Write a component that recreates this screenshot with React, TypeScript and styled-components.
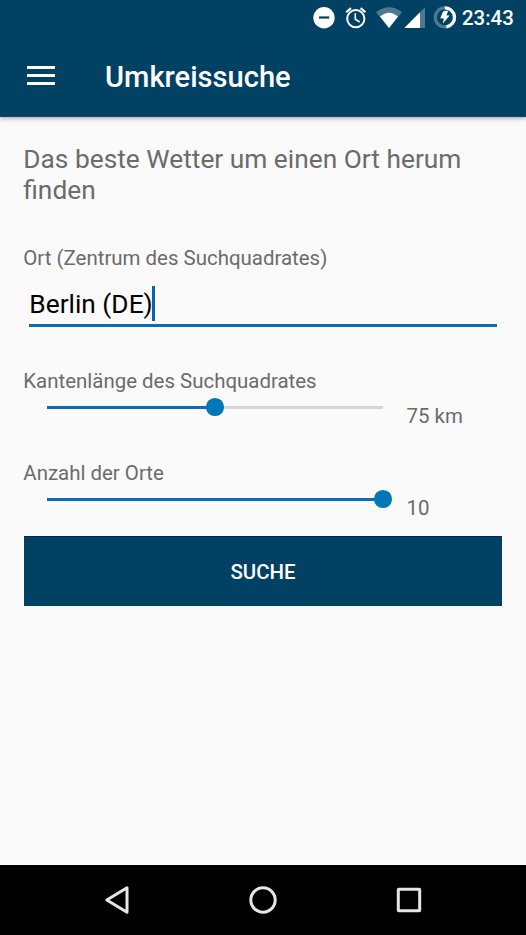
import React from "react";
import styled, { createGlobalStyle } from "styled-components";

const GlobalStyle = createGlobalStyle`
  * { box-sizing: border-box; }
  html, body, #root { height: 100%; }
  body {
    margin: 0;
    background: #fafafa;
    font-family: Roboto, "Liberation Sans", sans-serif;
    overflow: hidden;
  }
`;

const Screen = styled.div`
  display: flex;
  flex-direction: column;
  width: 526px;
  height: 935px;
  background: #fafafa;
`;

const Header = styled.header`
  flex: none;
  height: 117px;
  background: #014163;
  color: #fff;
  border-bottom: 1px solid #173f69;
  box-shadow: 0 1px 5px rgba(0, 0, 0, 0.38);
`;

const StatusBar = styled.div`
  display: flex;
  justify-content: flex-end;
  height: 35px;
  padding-right: 12px;
`;

const StatusIcons = styled.svg`
  flex: none;
  width: 150px;
  height: 35px;
`;

const Clock = styled.time`
  width: 52px;
  font-size: 20.4px;
  font-weight: 500;
  line-height: 36px;
  white-space: nowrap;
`;

const Toolbar = styled.div`
  display: flex;
  align-items: center;
  height: 81px;
  padding-left: 27px;
  gap: 50px;
`;

const MenuButton = styled.button`
  display: flex;
  flex-direction: column;
  gap: 5px;
  width: 28px;
  padding: 0;
  border: 0;
  background: none;
`;

const MenuLine = styled.span`
  height: 3px;
  background: #fff;
`;

const Title = styled.h1`
  margin: 3px 0 0;
  font-size: 29.1px;
  font-weight: 500;
  line-height: 34px;
`;

const Form = styled.main`
  flex: 1;
  padding: 27px 24px 0 23.3px;
  color: #6b6b6b;
`;

const Intro = styled.p`
  margin: 0;
  font-size: 26.3px;
  line-height: 31px;
`;

const Label = styled.div<{ $top: number }>`
  margin-top: ${({ $top }) => $top}px;
  font-size: 20.45px;
  line-height: 24px;
`;

const TextField = styled.div`
  display: flex;
  align-items: center;
  height: 57px;
  margin: 0 5.4px 0 6px;
  padding-top: 15px;
  border-bottom: 3px solid #0a6db5;
  color: #000;
  font-size: 26.3px;
`;

const FieldText = styled.span`
  line-height: 31px;
`;

const Caret = styled.span`
  width: 3px;
  height: 35px;
  margin: -3px 0 0 -0.8px;
  background: #0a62b0;
`;

const SliderRow = styled.div`
  display: flex;
  height: 34px;
  padding-left: 23.7px;
`;

const Track = styled.div`
  position: relative;
  width: 336px;
  height: 3px;
  margin-top: 13px;
  background: #d5d5d5;
`;

const Fill = styled.div<{ $value: number }>`
  width: ${({ $value }) => $value}%;
  height: 3px;
  background: #0a6db5;
`;

const Thumb = styled.div<{ $value: number }>`
  position: absolute;
  top: -7.8px;
  left: calc(${({ $value }) => $value}% - 8.7px);
  width: 17.6px;
  height: 17.6px;
  border-radius: 50%;
  background: #0277b5;
`;

const SliderValue = styled.output`
  margin: 11px 0 0 23.5px;
  font-size: 20.45px;
  line-height: 24px;
`;

const SearchButton = styled.button`
  display: block;
  width: 478.5px;
  height: 70px;
  margin: 17px 0 0 0.5px;
  padding: 0;
  border: 0;
  border-top: 1px solid #06265b;
  background: #014163;
  color: #fff;
  font: 500 20.45px Roboto, "Liberation Sans", sans-serif;
`;

const NavBar = styled.nav`
  flex: none;
  display: flex;
  justify-content: center;
  align-items: center;
  gap: 106px;
  height: 70px;
  background: #000;
`;

const NavIcon = styled.svg`
  width: 40px;
  height: 40px;
  fill: none;
  stroke: #e6e6e6;
  stroke-width: 3;
  stroke-linejoin: round;
`;

interface SliderProps {
  label: string;
  value: number;
  text: string;
  top: number;
}

function Slider({ label, value, text, top }: SliderProps) {
  return (
    <>
      <Label $top={top}>{label}</Label>
      <SliderRow>
        <Track role="slider" aria-label={label} aria-valuenow={value} aria-valuetext={text}>
          <Fill $value={value} />
          <Thumb $value={value} />
        </Track>
        <SliderValue>{text}</SliderValue>
      </SliderRow>
    </>
  );
}

function SystemIcons() {
  return (
    <StatusIcons viewBox="312 0 150 35" fill="none">
      <circle cx="324" cy="17.7" r="10.7" fill="#fff" />
      <path d="M319 17.5h10.2" stroke="#014163" strokeWidth="2.2" />
      <g stroke="#fff">
        <circle cx="355.8" cy="18.7" r="8.6" strokeWidth="2" />
        <path d="M355.3 13.2v6l4.4 2.8" strokeWidth="1.6" />
        <path d="M346.2 12.2l4.8-4.1M365.4 12.2l-4.8-4.1" strokeWidth="2.1" />
      </g>
      <path d="M376 12.2Q389 2.2 402 12.2L389 28Z" fill="#4d7a92" />
      <path d="M380 16.6Q389 9 398 16.6L389 28Z" fill="#fff" />
      <path d="M425 7.3V28H404.3Z" fill="#4d7a92" />
      <path d="M420 12.3V28H404.3Z" fill="#fff" />
      <circle cx="444.8" cy="17.4" r="9.5" stroke="#4d7a92" strokeWidth="3.2" />
      <path d="M444.8 7.9a9.5 9.5 0 0 1 1.6 18.9" stroke="#fff" strokeWidth="3.2" />
      <path d="M443.2 11.2l5-.6-1.7 4.8 3.1.2-6.7 7.9.9-5-3.6-.2Z" fill="#fff" />
    </StatusIcons>
  );
}

export default function App() {
  return (
    <Screen>
      <GlobalStyle />
      <Header>
        <StatusBar>
          <SystemIcons />
          <Clock>23:43</Clock>
        </StatusBar>
        <Toolbar>
          <MenuButton aria-label="Menü">
            <MenuLine />
            <MenuLine />
            <MenuLine />
          </MenuButton>
          <Title>Umkreissuche</Title>
        </Toolbar>
      </Header>
      <Form>
        <Intro>Das beste Wetter um einen Ort herum finden</Intro>
        <Label $top={40}>Ort (Zentrum des Suchquadrates)</Label>
        <TextField>
          <FieldText>Berlin (DE)</FieldText>
          <Caret />
        </TextField>
        <Slider label="Kantenlänge des Suchquadrates" value={50} text="75 km" top={42} />
        <Slider label="Anzahl der Orte" value={100} text="10" top={34} />
        <SearchButton>SUCHE</SearchButton>
      </Form>
      <NavBar>
        <NavIcon viewBox="0 0 40 40">
          <path d="M9.8 20L30 7.8V32.2Z" />
        </NavIcon>
        <NavIcon viewBox="0 0 40 40">
          <circle cx="20" cy="20" r="12.2" />
        </NavIcon>
        <NavIcon viewBox="0 0 40 40">
          <rect x="9.3" y="9.3" width="21.4" height="21.4" rx="0.5" />
        </NavIcon>
      </NavBar>
    </Screen>
  );
}
